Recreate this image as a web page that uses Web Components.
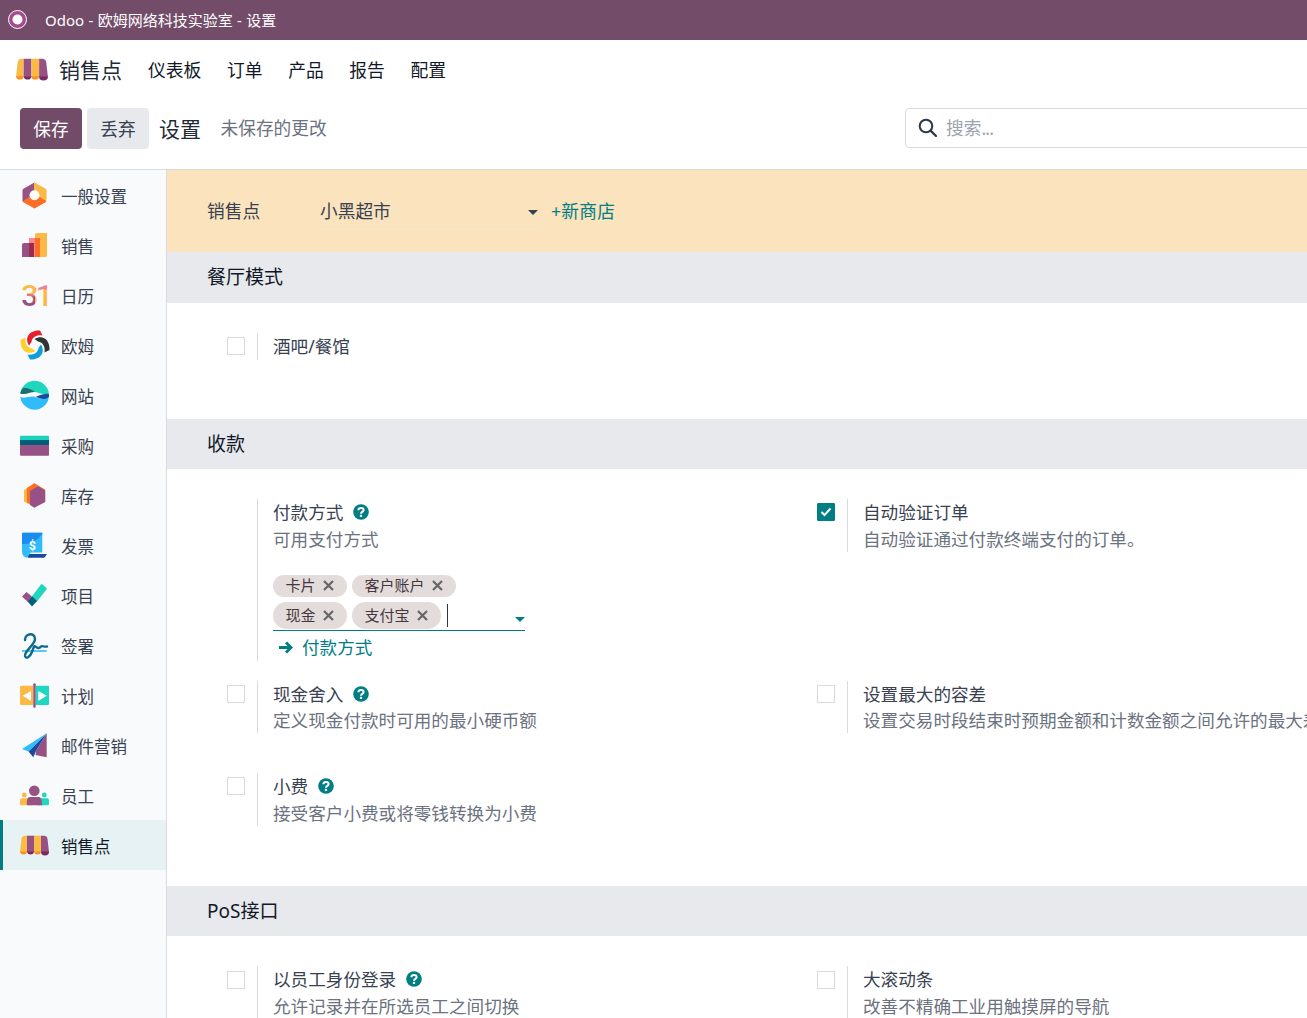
<!DOCTYPE html>
<html lang="zh">
<head>
<meta charset="utf-8">
<title>Odoo - 设置</title>
<style>
  html, body { margin: 0; height: 100%; overflow: hidden; background: #fff; }
  body {
    display: flex;
    flex-direction: column;
    font-family: "Noto Sans", "Noto Sans CJK SC", sans-serif;
    color: #374151;
  }
</style>
</head>
<body>
<odoo-titlebar>Odoo - 欧姆网络科技实验室 - 设置</odoo-titlebar>
<odoo-navbar></odoo-navbar>
<odoo-controlpanel></odoo-controlpanel>
<odoo-shell>
  <odoo-sidebar slot="side"></odoo-sidebar>
  <odoo-storebar></odoo-storebar>

  <settings-section title="餐厅模式" style="--head-h:51px;--pad-bottom:59.5px">
    <setting-box label="酒吧/餐馆"></setting-box>
  </settings-section>

  <settings-section title="收款">
    <setting-box label="付款方式" desc="可用支付方式" help nocheck>
      <pay-methods></pay-methods>
    </setting-box>
    <setting-box label="自动验证订单" desc="自动验证通过付款终端支付的订单。" checked></setting-box>
    <setting-box label="现金舍入" desc="定义现金付款时可用的最小硬币额" help style="--desc-gap:-1px"></setting-box>
    <setting-box label="设置最大的容差" desc="设置交易时段结束时预期金额和计数金额之间允许的最大差额" style="--desc-gap:-1px"></setting-box>
    <setting-box label="小费" desc="接受客户小费或将零钱转换为小费" help style="margin-top:20px"></setting-box>
  </settings-section>

  <settings-section title="PoS接口" style="--pad-top:30px">
    <setting-box label="以员工身份登录" desc="允许记录并在所选员工之间切换" help style="--check-top:5px"></setting-box>
    <setting-box label="大滚动条" desc="改善不精确工业用触摸屏的导航" style="--check-top:5px"></setting-box>
  </settings-section>
</odoo-shell>

<script>
// one swoosh of the pinwheel, turned four times
const OHM_BLADE = "M9 15.5 C4 7 10 0 20 .5 L22.5 5.5 C17 4.5 12 7 11.500 12 Z";

// app icons, all on a 30x30 box
const ICONS = {
  settings: `
    <path d="M14.5 3 L3 9.5 V21.5 L14.5 15.5 Z" fill="#985184" stroke="#985184" stroke-linejoin="round"/>
    <path d="M14.5 3 L26 9.5 V21.5 L14.5 15.5 Z" fill="#fbb945" stroke="#fbb945" stroke-linejoin="round"/>
    <path d="M3 21.5 L14.5 14 L26 21.5 L14.5 28 Z" fill="#fc6d26" stroke="#fc6d26" stroke-linejoin="round"/>
    <circle cx="14.5" cy="15.2" r="5" fill="#fff"/>`,
  sales: `
    <path d="M2 15 Q2 13 4 13 H14 V27 H2 Z" fill="#985184"/>
    <path d="M9 8 H20 V27 H9 Z" fill="#fc868b"/>
    <path d="M9 13 H14 V27 H9 Z" fill="#9b2a4b"/>
    <path d="M15 5 Q15 3 17 3 H27 V25 Q27 27 25 27 H15 Z" fill="#fbb945"/>
    <path d="M15 8 H20 V27 H15 Z" fill="#fc6d26"/>`,
  calendar: `
    <defs><pattern id="cal31" patternUnits="userSpaceOnUse" width="30" height="30">
      <rect width="15" height="30" fill="#985184"/>
      <rect width="15" height="14" fill="#fbb945"/>
      <rect y="14" width="15" height="2.5" fill="#e9718a"/>
      <rect x="15" width="15" height="30" fill="#fbb945"/>
      <rect x="15" width="15" height="9.5" fill="#e9829a"/>
    </pattern></defs>
    <text x="1.300" y="26.3" font-family="Roboto" font-weight="500" font-size="30" letter-spacing="-2.5" fill="url(#cal31)">31</text>`,
  ohm: `
    <path d="${OHM_BLADE}" fill="#e5202b"/>
    <path d="${OHM_BLADE}" fill="#333" transform="rotate(90 15 15)"/>
    <path d="${OHM_BLADE}" fill="#0d9fd8" transform="rotate(180 15 15)"/>
    <path d="${OHM_BLADE}" fill="#fcd12a" transform="rotate(270 15 15)"/>`,
  website: `
    <path d="M.3 13.5 A14.4 14.4 0 0 1 28.9 13.5 C24 16 19 12 14 12 C9 12 5 15 .3 13.5 Z" fill="#1fd6bf"/>
    <path d="M.3 13.5 Q.8 10.500 3 8 C8 7.5 12 9.5 15 12 C9.5 11.7 6 15.3 .3 13.5 Z" fill="#1d6f6e"/>
    <path d="M.3 17 C6 19 10 15.5 15 17 C20 18.5 25 20 28.9 17 A14.4 14.4 0 0 1 .3 17 Z" fill="#2ebcfa"/>
    <path d="M28.9 17 Q29.2 15.3 28.9 13.8 C23 14 19 15 15.5 17 C20 18 24.5 21 28.9 17 Z" fill="#1a4a9c"/>`,
  purchase: `
    <path d="M0 7 Q0 5.7 1 5.7 H28 Q29 5.7 29 7 V10 H0 Z" fill="#1ad3bb"/>
    <rect y="10" width="29" height="5" fill="#005e7a"/>
    <path d="M0 15 H29 V24.7 Q29 25.7 28 25.7 H1 Q0 25.7 0 24.7 Z" fill="#985184"/>`,
  inventory: `
    <path d="M4 10 L14.3 3.3 L20 7 L10 24.5 L4 21.7 Z" fill="#fbb945"/>
    <path d="M7 8 L14.3 3.3 L25 9.5 V12 L10 24 L7 22.5 Z" fill="#fc6d26"/>
    <path d="M10 11 L18 6.3 L25.3 10.5 V22 L14.3 27.7 L10 25 Z" fill="#985184"/>`,
  invoice: `
    <path d="M8 24 H27 L25 27 Q24.6 27.7 23.8 27.7 H8 Z" fill="#1a4a9c"/>
    <path d="M3 2.7 H22.3 V22.5 H12 Q9 22.5 8 27.7 H8 Q2 27.7 2 21 V3.7 Q2 2.7 3 2.7 Z" fill="#2ebcfa"/>
    <path d="M3 2.7 H22.3 V4 A24 24 0 0 1 2 14 V3.7 Q2 2.7 3 2.7 Z" fill="#1a8cf0"/>
    <text x="12.3" y="20.3" text-anchor="middle" font-family="Roboto" font-weight="700" font-size="12.5" fill="#fff">$</text>`,
  project: `
    <path d="M2 16.500 L6.500 12 L13 17.500 L8.5 22.5 Z" fill="#985184"/>
    <path d="M21 4.5 Q21.7 3.7 22.5 4.5 L26.5 8 Q27.3 8.8 26.5 9.6 L16.7 21.7 L11.7 16.7 Z" fill="#1fd6bf"/>
    <path d="M12.3 16.4 L17 21 L12 26.5 L7.7 21.5 Z" fill="#005e7a"/>`,
  sign: `
    <rect x="2" y="20.2" width="24.7" height="1.6" fill="#2ebcfa"/>
    <path d="M5 10 C5 3 15 2 15 9 C15 15 4 21 5 26 C6 29.5 10 27 12 22 C13.5 18 14 15 15.5 16.5 C17 18 19 19 21 16.5 C22 15.5 24 17 27 16.5" fill="none" stroke="#0c6b87" stroke-width="2.4" stroke-linecap="round"/>`,
  planning: `
    <path d="M1 5.7 H13.3 V25 H1 Q0 25 0 24 V6.7 Q0 5.7 1 5.7 Z" fill="#fbb945"/>
    <path d="M15.7 5.7 H28 Q29 5.7 29 6.7 V24 Q29 25 28 25 H15.7 Z" fill="#1fd6bf"/>
    <rect x="13.3" y="3.3" width="2.4" height="24.4" rx="1" fill="#985184"/>
    <path d="M2.7 15.7 L11 11 V21 Z M18.3 11 L26.7 15.7 L18.3 21 Z" fill="#fff"/>`,
  email: `
    <path d="M26.7 3.3 L16 21 L15.5 25 L26.7 27.3 Z" fill="#985184"/>
    <path d="M26.7 3.3 L8.5 21.5 L13.3 27.3 L16 21 Z" fill="#1a4a9c"/>
    <path d="M26.7 3.3 L2 19 L8.5 21.5 Z" fill="#2ebcfa"/>`,
  staff: `
    <circle cx="4.3" cy="15" r="2.4" fill="#fbb945"/>
    <circle cx="24.3" cy="15" r="2.4" fill="#1fd6bf"/>
    <path d="M0 20.5 Q0 18.3 2 18.3 H12 V25.3 H1.5 Q0 25.3 0 24 Z" fill="#fbb945"/>
    <path d="M17 18.3 H27 Q29 18.3 29 20.5 V24 Q29 25.3 27.5 25.3 H17 Z" fill="#1fd6bf"/>
    <circle cx="14.3" cy="10.7" r="5.3" fill="#985184"/>
    <path d="M7 25.3 Q6 17 10 17 H19 Q22 17 22 25.3 Z" fill="#985184"/>`,
  pos: `
    <path d="M5 5.7 H7 V22 H0 L1.5 9 Q2 5.7 5 5.7 Z" fill="#fbb945"/>
    <path d="M7 5.7 H14 V22 H7 Z" fill="#985184"/>
    <path d="M14 5.7 H21 V22 H14 Z" fill="#fbb945"/>
    <path d="M21 5.7 H24 Q27 5.7 27.5 9 L29 22 H21 Z" fill="#985184"/>
    <path d="M0 21.5 H7 V22 A3.6 3.4 0 0 1 0 22 Z M14 21.5 H21 V22 A3.6 3.4 0 0 1 14 22 Z" fill="#fc8f1a"/>
    <path d="M7 21.5 H14 V22 A3.6 3.4 0 0 1 7 22 Z M21 21.5 H29 V22 A4 3.4 0 0 1 21 22 Z" fill="#7a2a61"/>`
};

function iconSvg(name, w, h) {
  return `<svg width="${w}" height="${h}" viewBox="0 0 30 30" style="overflow:visible" aria-hidden="true">${ICONS[name]}</svg>`;
}

class OdooTitlebar extends HTMLElement {
  constructor() {
    super();
    this.attachShadow({ mode: "open" });
    this.shadowRoot.innerHTML = `
      <style>
        :host {
          display: flex;
          align-items: center;
          flex: none;
          box-sizing: border-box;
          height: 40px;
          background: #734c69;
          color: #fff;
          font-size: 15px;
          word-spacing: .5px;
          padding: 0 0 2px 8px;
        }
        svg { margin-right: 18px; flex: none; }
      </style>
      <svg width="19" height="19" viewBox="0 0 19 19">
        <circle cx="9.5" cy="9.5" r="9" fill="#a64b8f" stroke="#fff" stroke-width="1"/>
        <circle cx="9.5" cy="9.5" r="5" fill="#fff"/>
      </svg>
      <slot></slot>
    `;
  }
}

class OdooNavbar extends HTMLElement {
  constructor() {
    super();
    this.attachShadow({ mode: "open" });
    const items = ["仪表板", "订单", "产品", "报告", "配置"];
    this.shadowRoot.innerHTML = `
      <style>
        :host {
          display: flex;
          align-items: center;
          flex: none;
          box-sizing: border-box;
          height: 60px;
          padding: 0 0 2px 16px;
          color: #111827;
          font-size: 17.8px;
        }
        svg { flex: none; margin-right: 10px; }
        .brand { font-size: 21px; margin-right: 26px; color: #1f2937; }
        nav { display: flex; gap: 25.6px; }
      </style>
      ${iconSvg("pos", 33, 34)}
      <span class="brand">销售点</span>
      <nav>${items.map((t) => `<span>${t}</span>`).join("")}</nav>
    `;
  }
}

class OdooControlpanel extends HTMLElement {
  constructor() {
    super();
    this.attachShadow({ mode: "open" });
    this.shadowRoot.innerHTML = `
      <style>
        :host {
          display: flex;
          align-items: flex-start;
          flex: none;
          box-sizing: border-box;
          height: 70px;
          padding: 8px 0 0 20px;
          border-bottom: 1px solid #d8dadd;
          font-size: 17.7px;
        }
        .btn {
          box-sizing: border-box;
          width: 62px;
          height: 41px;
          display: flex;
          align-items: center;
          justify-content: center;
          padding-bottom: 2px;
          border-radius: 4px;
          background: #e7e9ed;
          color: #374151;
          margin-right: 5px;
        }
        .btn.primary { background: #714b67; color: #fff; }
        .name { font-size: 21px; color: #1f2937; margin: 6px 0 0 5px; line-height: 30px; }
        .dirty { color: #6b7280; margin: 5px 0 0 19.500px; line-height: 30px; }
        .search {
          box-sizing: border-box;
          flex: none;
          display: flex;
          align-items: center;
          gap: 9px;
          width: 500px;
          height: 40px;
          margin-left: auto;
          margin-right: -98px;
          padding-left: 12px;
          border: 1px solid #d8dadd;
          border-radius: 4px;
          color: #9ca3af;
        }
        .search span { padding-bottom: 2px; }
        .search b { font-weight: 400; letter-spacing: -.8px; }
        .search svg { margin-bottom: 2px; }
      </style>
      <span class="btn primary">保存</span>
      <span class="btn">丢弃</span>
      <span class="name">设置</span>
      <span class="dirty">未保存的更改</span>
      <div class="search">
        <svg width="19" height="19" viewBox="0 0 19 19">
          <circle cx="8" cy="8" r="6.3" fill="none" stroke="#2b3647" stroke-width="2"/>
          <path d="M12.6 12.6 L18 18" stroke="#2b3647" stroke-width="2.2" stroke-linecap="round"/>
        </svg>
        <span>搜索<b>...</b></span>
      </div>
    `;
  }
}

class OdooShell extends HTMLElement {
  constructor() {
    super();
    this.attachShadow({ mode: "open" });
    this.shadowRoot.innerHTML = `
      <style>
        :host { display: flex; flex: 1; min-height: 0; }
        main { flex: 1; min-width: 0; overflow: hidden; }
      </style>
      <slot name="side"></slot>
      <main><slot></slot></main>
    `;
  }
}

class OdooSidebar extends HTMLElement {
  constructor() {
    super();
    this.attachShadow({ mode: "open" });
    const apps = [
      ["settings", "一般设置"], ["sales", "销售"], ["calendar", "日历"], ["ohm", "欧姆"],
      ["website", "网站"], ["purchase", "采购"], ["inventory", "库存"], ["invoice", "发票"],
      ["project", "项目"], ["sign", "签署"], ["planning", "计划"], ["email", "邮件营销"],
      ["staff", "员工"], ["pos", "销售点"]
    ];
    this.shadowRoot.innerHTML = `
      <style>
        :host {
          display: block;
          flex: none;
          box-sizing: border-box;
          width: 167px;
          background: #f9fafb;
          border-right: 1px solid #d8dadd;
        }
        .app {
          display: flex;
          align-items: center;
          gap: 11px;
          height: 50px;
          padding-left: 20px;
          font-size: 16.5px;
          color: #374151;
        }
        .app span { padding-top: 2px; }
        .app.active { background: #e6f2f3; box-shadow: inset 3px 0 0 #017e84; color: #111827; }
        svg { flex: none; }
      </style>
      ${apps.map(([icon, name]) => `
        <div class="app ${icon === "pos" ? "active" : ""}">${iconSvg(icon, 30, 30)}<span>${name}</span></div>
      `).join("")}
    `;
  }
}

class OdooStorebar extends HTMLElement {
  constructor() {
    super();
    this.attachShadow({ mode: "open" });
    this.shadowRoot.innerHTML = `
      <style>
        :host {
          display: flex;
          align-items: center;
          box-sizing: border-box;
          height: 82px;
          padding: 0 0 2px 40px;
          background: #fae3bd;
          color: #374151;
          font-size: 17.7px;
        }
        .name { width: 113px; }
        .select {
          box-sizing: border-box;
          display: flex;
          align-items: center;
          justify-content: space-between;
          width: 218px;
          height: 32px;
          margin-top: 2px;
          border-bottom: 1px solid #eee3cf;
          padding-bottom: 1px;
        }
        .caret {
          width: 0;
          height: 0;
          border: 5px solid transparent;
          border-top-color: #374151;
          border-bottom: 0;
          margin-top: 4px;
        }
        .new { color: #017e84; margin-left: 13px; letter-spacing: .25px; }
      </style>
      <span class="name">销售点</span>
      <div class="select"><span>小黑超市</span><i class="caret"></i></div>
      <span class="new">+新商店</span>
    `;
  }
}

class SettingsSection extends HTMLElement {
  constructor() {
    super();
    this.attachShadow({ mode: "open" });
    this.shadowRoot.innerHTML = `
      <style>
        :host { display: block; }
        h2 {
          box-sizing: border-box;
          display: flex;
          align-items: center;
          height: var(--head-h, 50px);
          margin: 0;
          padding: 0 0 3px 40px;
          background: #e7e9ed;
          color: #111827;
          font-size: 19px;
          font-weight: 400;
        }
        .grid {
          display: grid;
          grid-template-columns: 590px 590px;
          align-items: start;
          row-gap: 20px;
          padding: var(--pad-top, 30px) 0 var(--pad-bottom, 60px);
        }
      </style>
      <h2></h2>
      <div class="grid"><slot></slot></div>
    `;
  }

  connectedCallback() {
    this.shadowRoot.querySelector("h2").textContent = this.getAttribute("title");
    this.removeAttribute("title");
  }
}

class SettingBox extends HTMLElement {
  constructor() {
    super();
    this.attachShadow({ mode: "open" });
  }

  connectedCallback() {
    const label = this.getAttribute("label") || "";
    const desc = this.getAttribute("desc");
    const help = this.hasAttribute("help")
      ? `<svg class="help" width="16" height="16" viewBox="0 0 16 16">
           <circle cx="8" cy="8" r="7.8" fill="#017e84"/>
           <path d="M5.4 6.2 C5.5 3.2 10.6 3.2 10.6 6 C10.6 7.9 8 7.8 8 9.7" fill="none" stroke="#fff" stroke-width="2"/>
           <rect x="6.9" y="10.8" width="2.2" height="2.2" fill="#fff"/>
         </svg>`
      : "";
    let check = `<span class="check"></span>`;
    if (this.hasAttribute("nocheck")) check = "";
    if (this.hasAttribute("checked")) {
      check = `<span class="check on">
        <svg width="12" height="10" viewBox="0 0 12 10"><path d="M1.5 5 L4.5 8 L10.5 1.5" fill="none" stroke="#fff" stroke-width="2"/></svg>
      </span>`;
    }
    this.shadowRoot.innerHTML = `
      <style>
        :host {
          display: grid;
          grid-template-columns: 90px 1fr;
          font-size: 17.6px;
          line-height: 26.5px;
          min-width: 0;
        }
        .left { padding: var(--check-top, 4px) 0 0 60px; }
        .check {
          box-sizing: border-box;
          display: flex;
          align-items: center;
          justify-content: center;
          width: 18px;
          height: 18px;
          border: 1px solid #d8dadd;
          background: #fff;
        }
        .check.on { background: #017e84; border-color: #017e84; border-radius: 1px; }
        .right { border-left: 1px solid #d8dadd; padding-left: 15px; white-space: nowrap; min-width: 0; overflow: hidden; }
        .label { display: flex; align-items: center; gap: 9.5px; color: #374151; }
        .desc { color: #6b7280; margin-top: var(--desc-gap, 0); }
        .help { flex: none; }
      </style>
      <div class="left">${check}</div>
      <div class="right">
        <div class="label"><span>${label}</span>${help}</div>
        ${desc ? `<div class="desc">${desc}</div>` : ""}
        <slot></slot>
      </div>
    `;
  }
}

class TagChip extends HTMLElement {
  constructor() {
    super();
    this.attachShadow({ mode: "open" });
    this.shadowRoot.innerHTML = `
      <style>
        :host {
          display: inline-flex;
          align-items: center;
          gap: 7px;
          padding: 0 13.5px 1px 12.5px;
          min-height: 22px;
          box-sizing: border-box;
          border-radius: 14px;
          background: #e3dcdb;
          color: #45373c;
          font-size: 15px;
          line-height: 21px;
        }
        svg { flex: none; }
      </style>
      <slot></slot>
      <svg width="11" height="11" viewBox="0 0 11 11">
        <path d="M1 1 L10 10 M10 1 L1 10" stroke="#666" stroke-width="2.2"/>
      </svg>
    `;
  }
}

class PayMethods extends HTMLElement {
  constructor() {
    super();
    this.attachShadow({ mode: "open" });
    this.shadowRoot.innerHTML = `
      <style>
        :host { display: block; width: 252px; margin-top: 23px; }
        .field {
          display: flex;
          flex-wrap: wrap;
          gap: 5px;
          border-bottom: 1px solid #017e84;
          padding-bottom: 1px;
        }
        .input { flex: 1; display: flex; align-items: center; justify-content: space-between; height: 27px; }
        .cursor { width: 1px; height: 23px; margin-left: 1px; background: #2b3647; }
        .caret {
          width: 0;
          height: 0;
          border: 5px solid transparent;
          border-top-color: #017e84;
          border-bottom: 0;
          margin-top: 7px;
        }
        .link {
          box-sizing: border-box;
          display: flex;
          align-items: center;
          gap: 9px;
          height: 30px;
          padding: 3px 0 0 5px;
          color: #017e84;
        }
      </style>
      <div class="field">
        <tag-chip>卡片</tag-chip>
        <tag-chip>客户账户</tag-chip>
        <tag-chip>现金</tag-chip>
        <tag-chip>支付宝</tag-chip>
        <div class="input"><i class="cursor"></i><i class="caret"></i></div>
      </div>
      <div class="link">
        <svg width="15" height="13" viewBox="0 0 15 13">
          <path d="M1 6.5 H13 M8 1.5 L13 6.5 L8 11.5" fill="none" stroke="#017e84" stroke-width="3"/>
        </svg>
        <span>付款方式</span>
      </div>
    `;
  }
}

customElements.define("odoo-titlebar", OdooTitlebar);
customElements.define("odoo-navbar", OdooNavbar);
customElements.define("odoo-controlpanel", OdooControlpanel);
customElements.define("odoo-shell", OdooShell);
customElements.define("odoo-sidebar", OdooSidebar);
customElements.define("odoo-storebar", OdooStorebar);
customElements.define("settings-section", SettingsSection);
customElements.define("setting-box", SettingBox);
customElements.define("tag-chip", TagChip);
customElements.define("pay-methods", PayMethods);
</script>
</body>
</html>
